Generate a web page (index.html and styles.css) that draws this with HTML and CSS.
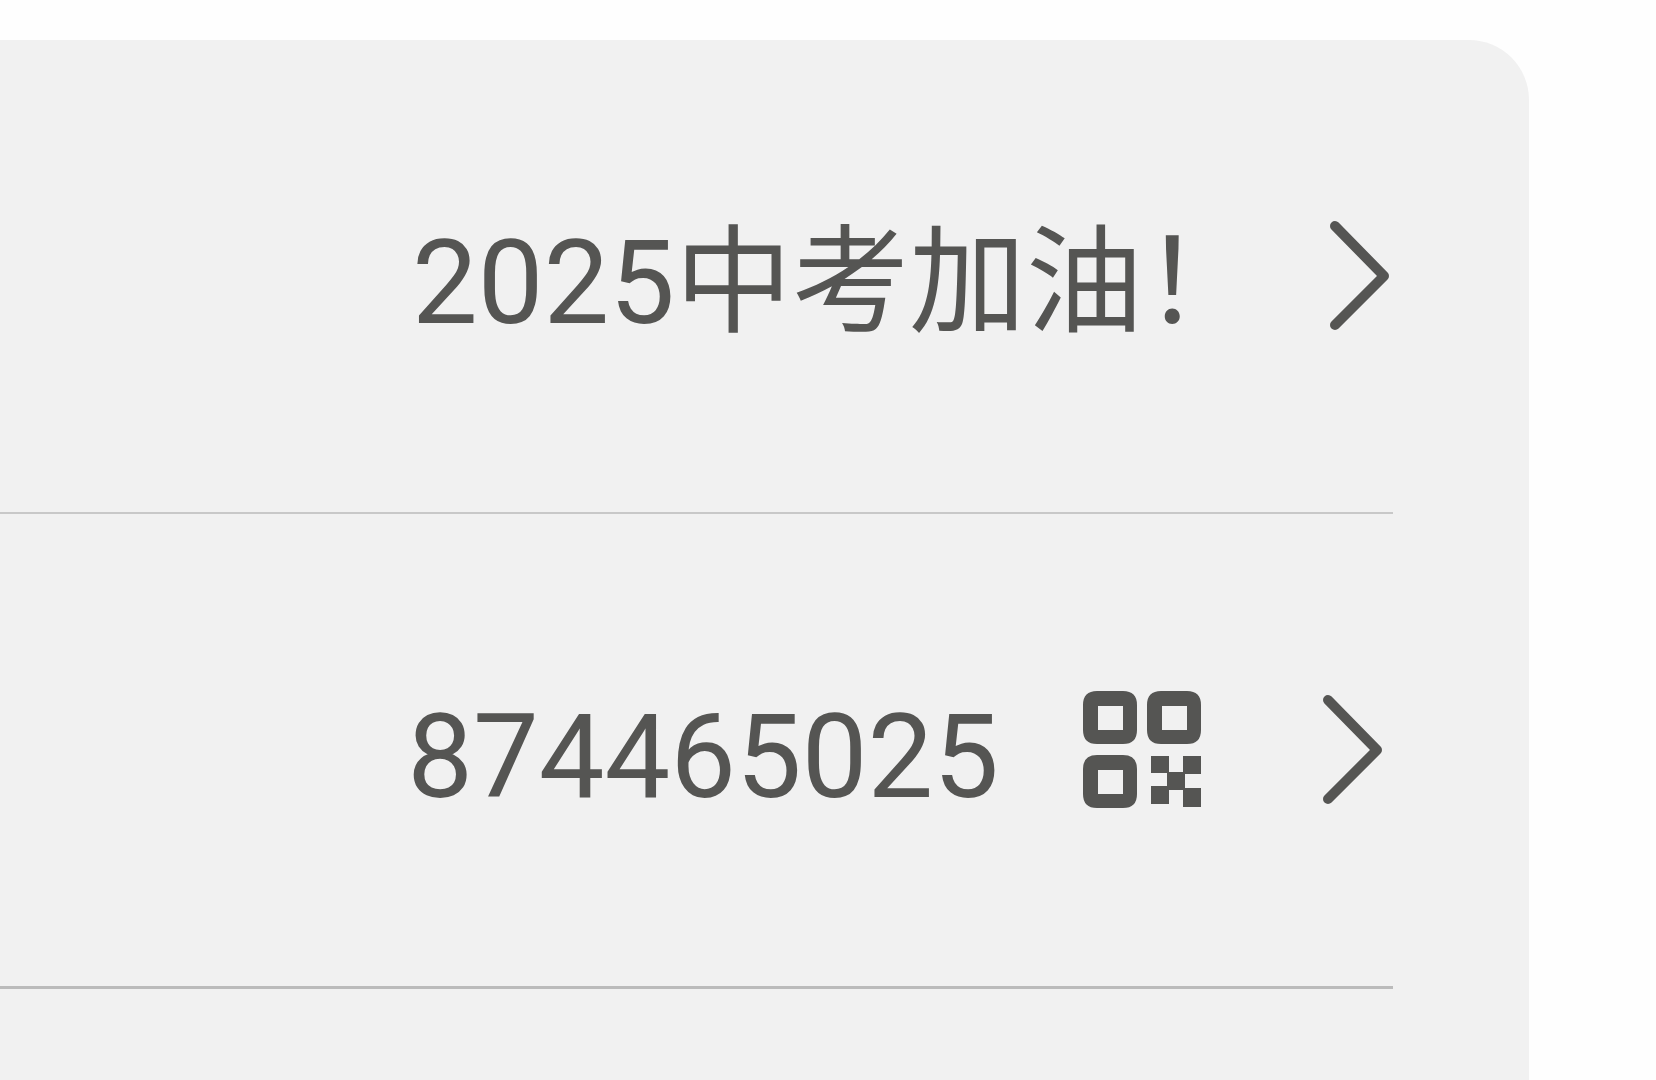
FILE: index.html
```
<!DOCTYPE html>
<html lang="zh-CN">

<head>
    <meta charset="UTF-8">
    <title>资料</title>
    <link rel="stylesheet" href="styles.css">
</head>

<body>
    <main class="card">
        <a class="row" href="#name">
            <span class="value">2025中考加油！</span>
            <svg class="arrow" viewBox="0 0 60 112" aria-hidden="true">
                <path d="M5 6 L54 56 L5 105" />
            </svg>
        </a>
        <a class="row account" href="#account">
            <span class="value">874465025</span>
            <svg class="qr" viewBox="0 0 118 118" aria-hidden="true">
                <path class="ring" d="M14 0h26q14 0 14 14v25q0 14-14 14h-26q-14 0-14-14v-25q0-14 14-14z M15 15v24h25v-24z" />
                <path class="ring" d="M78 0h26q14 0 14 14v25q0 14-14 14h-26q-14 0-14-14v-25q0-14 14-14z M79 15v24h25v-24z" />
                <path class="ring" d="M14 64h26q14 0 14 14v25q0 14-14 14h-26q-14 0-14-14v-25q0-14 14-14z M15 79v24h25v-24z" />
                <path d="M68 65h18v16h14v-16h18v18h-16v14h16v19h-18v-17h-14v14h-18v-18h16v-13h-16z" />
            </svg>
            <svg class="arrow" viewBox="0 0 60 112" aria-hidden="true">
                <path d="M5 6 L54 56 L5 105" />
            </svg>
        </a>
    </main>
</body>

</html>
```
FILE: styles.css
```
body {
    margin: 0;
    background-color: #fefefe;
    font-family: Roboto, "Noto Sans CJK SC", sans-serif;
}

.card {
    box-sizing: border-box;
    min-height: calc(100vh - 40px);
    margin: 40px 127px 0 0;
    padding-right: 136px;
    background-color: #f1f1f1;
    border-top-right-radius: 60px;
}

.row {
    display: flex;
    align-items: center;
    justify-content: flex-end;
    padding: 159px 3px 159px 0;
    border-bottom: 2px solid #c8c8c8;
    color: #555553;
    text-decoration: none;
}

.value {
    padding-top: 14px;
    font-size: 117px;
    line-height: 140px;
    white-space: nowrap;
}

.arrow {
    width: 60px;
    height: 112px;
    margin-left: 70px;
    fill: none;
    stroke: #555553;
    stroke-width: 10px;
    stroke-linecap: round;
    stroke-linejoin: round;
}

.qr {
    width: 118px;
    height: 118px;
    margin-left: 84px;
    fill: #555553;
}

.ring {
    fill-rule: evenodd;
}

/* second row */
.account {
    padding-right: 10px;
    border-bottom: 3px solid #bbbbbb;
}

.account .arrow {
    margin-left: 122px;
}
```
